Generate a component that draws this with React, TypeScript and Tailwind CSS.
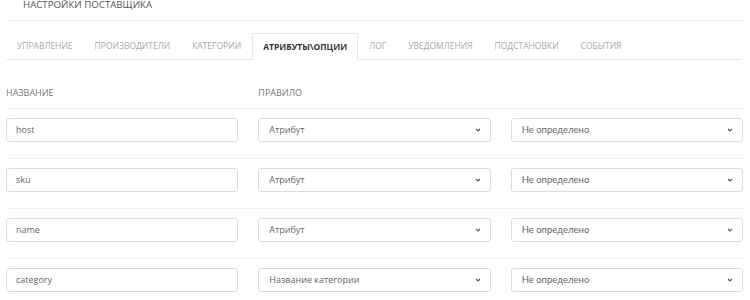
import React from 'react';

const tabs = ['Управление', 'Производители', 'Категории', 'Атрибуты\\Опции', 'Лог', 'Уведомления', 'Подстановки', 'События'];

const rows = [
  { name: 'host', rule: 'Атрибут', value: 'Не определено' },
  { name: 'sku', rule: 'Атрибут', value: 'Не определено' },
  { name: 'name', rule: 'Атрибут', value: 'Не определено' },
  { name: 'category', rule: 'Название категории', value: 'Не определено' },
];

const Chevron: React.FC = () => (
  <svg width="6" height="4" viewBox="0 0 6 4" className="shrink-0">
    <path d="M1 1 L3 3 L5 1" fill="none" stroke="#555" strokeWidth="1.2" />
  </svg>
);

const SelectBox: React.FC<{ label: string; lato?: boolean }> = ({ label, lato }) => (
  <div className="flex h-[24px] items-center justify-between rounded-[3px] border border-[#dcdcdc] bg-white pl-[10px] pr-[9px]">
    <span
      className={
        lato
          ? "font-['Lato',sans-serif] text-[9.5px] text-[#666]"
          : "font-['Open_Sans',sans-serif] text-[9px] text-[#666]"
      }
    >
      {label}
    </span>
    <Chevron />
  </div>
);

const App: React.FC = () => {
  return (
    <div className="h-[300px] w-[750px] overflow-hidden bg-white font-['Open_Sans',sans-serif]">
      <div className="mx-[6px] h-[21px] border-b border-[#f1f1f1]">
        <div className="pl-[17px] text-[9.7px] leading-[9px] text-[#555]">НАСТРОЙКИ ПОСТАВЩИКА</div>
      </div>

      <div className="mx-[6px] mt-[12px] flex w-[736px] border-b border-[#e6e6e6]">
        {tabs.map((tab, i) => {
          const active = i === 3;
          return (
            <div
              key={tab}
              className={
                active
                  ? '-mb-px flex h-[27px] items-center border border-b-0 border-[#e6e6e6] bg-white px-[10px] text-[8.5px] font-bold uppercase text-[#333]'
                  : 'flex h-[26px] items-center border border-transparent px-[10px] text-[8.5px] uppercase text-[#a8a8a8]'
              }
            >
              {tab}
            </div>
          );
        })}
      </div>

      <div className="mx-[6px] w-[737px]">
        <div className="grid grid-cols-3 gap-x-[20px] pb-[9px] pt-[27px] text-[9px] leading-[12px] text-[#777]">
          <div>НАЗВАНИЕ</div>
          <div>ПРАВИЛО</div>
          <div />
        </div>

        {rows.map((row) => (
          <div key={row.name} className="grid grid-cols-3 gap-x-[20px] border-t border-[#f0f0f0] pb-[16px] pt-[9px]">
            <div className="flex h-[24px] items-center rounded-[3px] border border-[#dcdcdc] bg-white px-[9px] text-[9px] text-[#666]">
              {row.name}
            </div>
            <SelectBox label={row.rule} />
            <SelectBox label={row.value} lato />
          </div>
        ))}
      </div>
    </div>
  );
};

export default App;
